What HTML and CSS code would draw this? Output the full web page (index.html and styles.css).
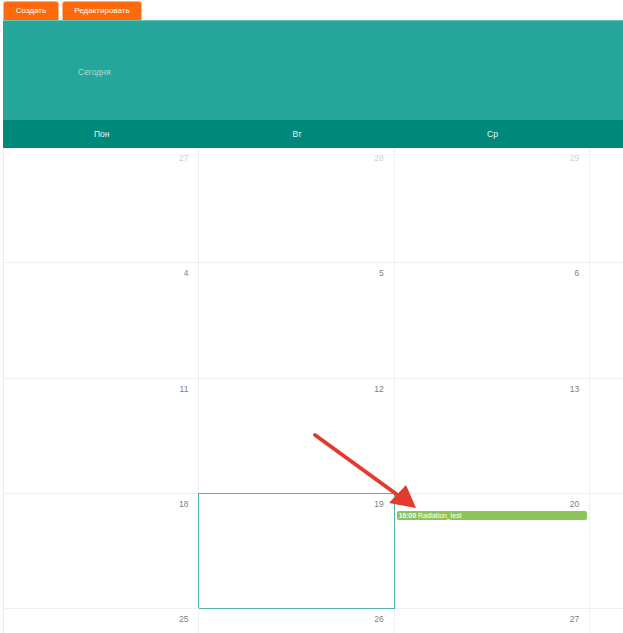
FILE: index.html
```html
<!DOCTYPE html>
<html lang="ru">
<head>
<meta charset="utf-8">
<title>Календарь</title>
<link rel="stylesheet" href="styles.css">
</head>
<body>
<div class="toolbar">
  <button class="btn btn-create">Создать</button>
  <button class="btn btn-edit">Редактировать</button>
</div>
<div class="calendar">
  <div class="cal-head"><span class="today">Сегодня</span></div>
  <div class="weekdays">
    <div>Пон</div><div>Вт</div><div>Ср</div><div></div>
  </div>
  <div class="month">
    <div class="cell other"><span class="num">27</span></div>
    <div class="cell other"><span class="num">28</span></div>
    <div class="cell other"><span class="num">29</span></div>
    <div class="cell clip"></div>

    <div class="cell"><span class="num">4</span></div>
    <div class="cell"><span class="num">5</span></div>
    <div class="cell"><span class="num">6</span></div>
    <div class="cell clip"></div>

    <div class="cell"><span class="num">11</span></div>
    <div class="cell"><span class="num">12</span></div>
    <div class="cell"><span class="num">13</span></div>
    <div class="cell clip"></div>

    <div class="cell"><span class="num">18</span></div>
    <div class="cell selected"><span class="num">19</span></div>
    <div class="cell"><span class="num">20</span><div class="event"><b>10:00</b> Radiation_test</div></div>
    <div class="cell clip"></div>

    <div class="cell last"><span class="num">25</span></div>
    <div class="cell last"><span class="num">26</span></div>
    <div class="cell last"><span class="num">27</span></div>
    <div class="cell clip last"></div>
  </div>
</div>
<svg class="arrow" width="623" height="633" viewBox="0 0 623 633" aria-hidden="true">
  <line x1="315" y1="435" x2="399" y2="496" stroke="#e23b2e" stroke-width="4" stroke-linecap="round"/>
  <polygon points="416,508 389,503 406,485" fill="#e23b2e"/>
</svg>
</body>
</html>
```
FILE: styles.css
```css
html, body {
  margin: 0;
  padding: 0;
  overflow: hidden;
  width: 623px;
  height: 633px;
  background: #fff;
  font-family: "Liberation Sans", Arial, sans-serif;
}

body {
  display: flex;
  flex-direction: column;
}

.toolbar {
  display: flex;
  gap: 3px;
  padding: 1px 0 0 3px;
  height: 19px;
  flex: none;
}

.btn {
  height: 19px;
  margin: 0;
  padding: 0;
  border: 1px solid #f7b48a;
  border-bottom: none;
  border-radius: 3px 3px 0 0;
  background: #fc6a0b;
  color: #fff;
  font-family: "Liberation Sans", Arial, sans-serif;
  font-size: 8px;
  line-height: 18px;
}

.btn-create {
  width: 56px;
}

.btn-edit {
  width: 80px;
}

.calendar {
  margin-left: 3px;
  flex: 1;
  min-height: 0;
  display: flex;
  flex-direction: column;
}

.cal-head {
  height: 100px;
  flex: none;
  background: #26a69a;
  border-top: 1px solid #6cc3ba;
  box-sizing: border-box;
  display: flex;
  align-items: center;
  padding-left: 75px;
}

.today {
  color: #a9dcd5;
  font-size: 8.5px;
  margin-top: 2px;
}

.weekdays {
  display: grid;
  grid-template-columns: 195.4px 195.4px 195.4px 1fr;
  height: 28px;
  flex: none;
  background: #00897b;
  padding-left: 1px;
}

.weekdays div {
  color: #e6f4f2;
  font-size: 8.5px;
  text-align: center;
  line-height: 28px;
}

.month {
  flex: 1;
  min-height: 0;
  display: grid;
  grid-template-columns: 195.4px 195.4px 195.4px 1fr;
  grid-template-rows: repeat(4, 115.3px) 1fr;
  border-left: 1px solid #ececec;
}

.cell {
  border-right: 1px solid #efefef;
  border-bottom: 1px solid #efefef;
  box-sizing: border-box;
  display: flex;
  flex-direction: column;
  align-items: flex-end;
  position: relative;
}

.cell.clip {
  border-right: none;
}

.cell.last {
  border-bottom: none;
}

.num {
  padding: 5px 10px 0 0;
  font-size: 8.5px;
  line-height: 10px;
  color: #808080;
}

.cell.other .num {
  color: #d0d0d0;
}

.cell.selected {
  border-right-color: #4fb3aa;
  border-bottom-color: #4fb3aa;
  box-shadow: -1px -1px 0 0 #4fb3aa;
  z-index: 1;
}

.event {
  align-self: stretch;
  margin: 2px 2px 0 2px;
  height: 9px;
  border-radius: 2px;
  background: #8dc558;
  color: #fff;
  font-size: 6.8px;
  line-height: 9px;
  padding-left: 2px;
  white-space: nowrap;
  overflow: hidden;
}

.event b {
  font-weight: bold;
}

.arrow {
  position: absolute;
  left: 0;
  top: 0;
  pointer-events: none;
  z-index: 5;
}
```
